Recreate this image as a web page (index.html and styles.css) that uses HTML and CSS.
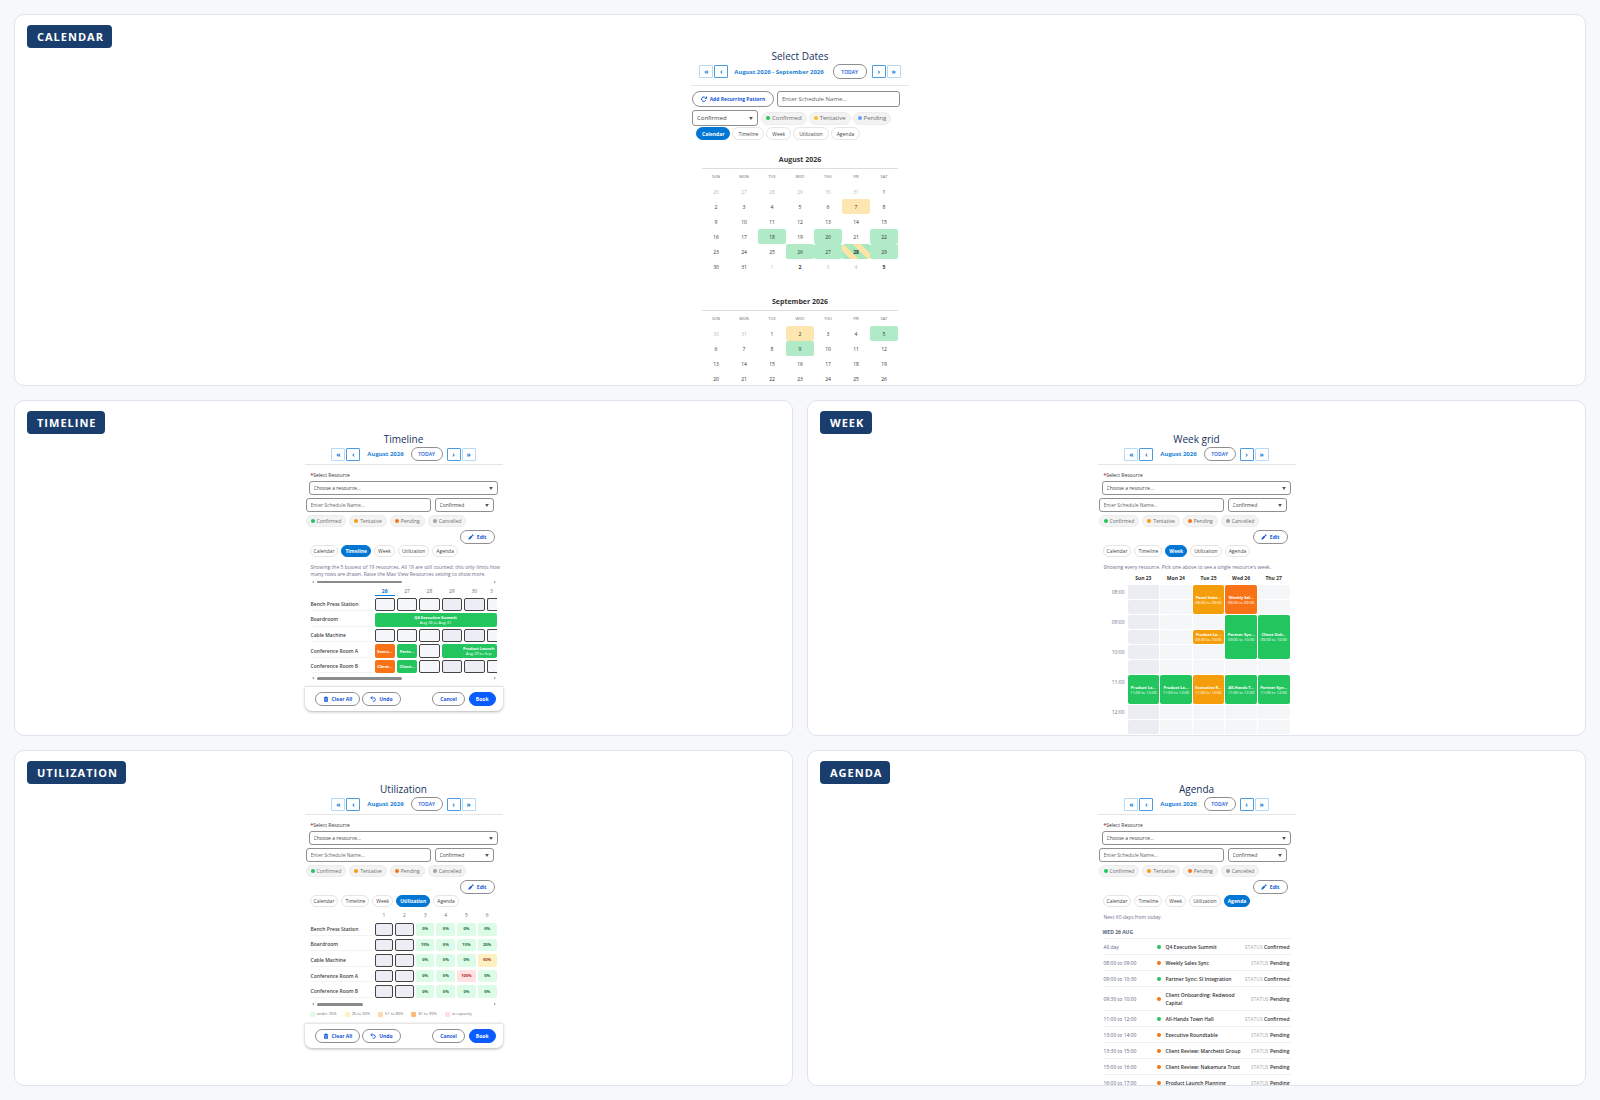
FILE: index.html
```html
<!DOCTYPE html>
<html lang="en">
<head>
    <meta charset="UTF-8">
    <meta name="viewport" content="width=device-width, initial-scale=1.0">
    <title>Schedule Views</title>
    <link rel="stylesheet" href="styles.css">
</head>
<body>
    <svg class="sprite" aria-hidden="true">
        <symbol id="i-edit" viewBox="0 0 16 16"><path d="M1 15l1-4.500 6.500-6.500 3.500 3.500L5.500 14zM9.700 2.800l1.600-1.600a1.200 1.200 0 0 1 1.700 0l1.800 1.800a1.200 1.200 0 0 1 0 1.700l-1.600 1.600z" fill="currentColor"/></symbol>
        <symbol id="i-trash" viewBox="0 0 16 16"><path d="M2 3h4V1h4v2h4v2H2zM3 6h10v8a1.500 1.500 0 0 1-1.500 1.500h-7A1.500 1.500 0 0 1 3 14z" fill="currentColor"/><path d="M6.500 8v5M9.500 8v5" stroke="#fff" stroke-width="1"/></symbol>
        <symbol id="i-undo" viewBox="0 0 16 16"><path d="M6 1L2 5l4 4M2.500 5H10a4 4 0 0 1 4 4v1a4 4 0 0 1-4 4H7" fill="none" stroke="currentColor" stroke-width="2.400"/></symbol>
        <symbol id="i-repeat" viewBox="0 0 16 16"><path d="M10 3A6 6 0 1 0 13 11" fill="none" stroke="currentColor" stroke-width="2.600"/><path d="M9 7h7V0z" fill="currentColor"/></symbol>
    </svg>

    <section class="panel wide">
        <span class="badge">CALENDAR</span>
        <div class="widget large">
            <h2>Select Dates</h2>
            <div class="nav">
                <button class="step far">«</button><button class="step">‹</button>
                <span class="range">August 2026 - September 2026</span>
                <button class="pill today">TODAY</button>
                <button class="step">›</button><button class="step far">»</button>
            </div>
            <div class="row">
                <button class="pill recurring"><svg><use href="#i-repeat"/></svg>Add Recurring Pattern</button>
                <input class="field" type="text" aria-label="Schedule name" placeholder="Enter Schedule Name...">
            </div>
            <div class="row">
                <select class="field status" aria-label="Status"><option>Confirmed</option></select>
                <div class="chips">
                    <span class="chip"><i class="dot green"></i>Confirmed</span>
                    <span class="chip"><i class="dot yellow"></i>Tentative</span>
                    <span class="chip"><i class="dot blue"></i>Pending</span>
                </div>
            </div>
            <div class="tabs">
                <button class="active">Calendar</button><button>Timeline</button><button>Week</button><button>Utilization</button><button>Agenda</button>
            </div>
            <table class="month">
                <caption>August 2026</caption>
                <thead><tr><th>SUN</th><th>MON</th><th>TUE</th><th>WED</th><th>THU</th><th>FRI</th><th>SAT</th></tr></thead>
                <tbody>
                    <tr><td class="out">26</td><td class="out">27</td><td class="out">28</td><td class="out">29</td><td class="out">30</td><td class="out">31</td><td>1</td></tr>
                    <tr><td>2</td><td>3</td><td>4</td><td>5</td><td>6</td><td class="tentative">7</td><td>8</td></tr>
                    <tr><td>9</td><td>10</td><td>11</td><td>12</td><td>13</td><td>14</td><td>15</td></tr>
                    <tr><td>16</td><td>17</td><td class="confirmed">18</td><td>19</td><td class="confirmed">20</td><td>21</td><td class="confirmed">22</td></tr>
                    <tr><td>23</td><td>24</td><td>25</td><td class="confirmed">26</td><td class="confirmed">27</td><td class="mixed">28</td><td class="confirmed">29</td></tr>
                    <tr><td>30</td><td>31</td><td class="out">1</td><td class="strong">2</td><td class="out">3</td><td class="out">4</td><td class="strong">5</td></tr>
                </tbody>
            </table>
            <table class="month">
                <caption>September 2026</caption>
                <thead><tr><th>SUN</th><th>MON</th><th>TUE</th><th>WED</th><th>THU</th><th>FRI</th><th>SAT</th></tr></thead>
                <tbody>
                    <tr><td class="out">30</td><td class="out">31</td><td>1</td><td class="tentative">2</td><td>3</td><td>4</td><td class="confirmed">5</td></tr>
                    <tr><td>6</td><td>7</td><td>8</td><td class="confirmed">9</td><td>10</td><td>11</td><td>12</td></tr>
                    <tr><td>13</td><td>14</td><td>15</td><td>16</td><td>17</td><td>18</td><td>19</td></tr>
                    <tr><td>20</td><td>21</td><td>22</td><td>23</td><td>24</td><td>25</td><td>26</td></tr>
                </tbody>
            </table>
        </div>
    </section>

    <section class="panel">
        <span class="badge">TIMELINE</span>
        <div class="widget">
            <h2>Timeline</h2>
            <div class="nav">
                <button class="step far">«</button><button class="step">‹</button>
                <span class="range">August 2026</span>
                <button class="pill today">TODAY</button>
                <button class="step">›</button><button class="step far">»</button>
            </div>
            <div class="resource">
                <label for="res-timeline"><b>*</b>Select Resource</label>
                <select class="field" id="res-timeline"><option>Choose a resource...</option></select>
            </div>
            <div class="row">
                <input class="field" type="text" aria-label="Schedule name" placeholder="Enter Schedule Name...">
                <select class="field status" aria-label="Status"><option>Confirmed</option></select>
            </div>
            <div class="chips">
                <span class="chip"><i class="dot green"></i>Confirmed</span>
                <span class="chip"><i class="dot amber"></i>Tentative</span>
                <span class="chip"><i class="dot orange"></i>Pending</span>
                <span class="chip"><i class="dot gray"></i>Cancelled</span>
            </div>
            <button class="pill edit"><svg><use href="#i-edit"/></svg>Edit</button>
            <div class="tabs">
                <button>Calendar</button><button class="active">Timeline</button><button>Week</button><button>Utilization</button><button>Agenda</button>
            </div>
            <p class="hint">Showing the 5 busiest of 19 resources. All 19 are still counted; this only limits how many rows are drawn. Raise the Max View Resources setting to show more.</p>
            <div class="scrollbar thin"><i class="thumb half"></i></div>
            <table class="timeline">
                <colgroup><col class="name"><col><col><col><col><col><col class="cut"></colgroup>
                <thead><tr><th></th><th class="now">26</th><th>27</th><th>28</th><th>29</th><th>30</th><th>3</th></tr></thead>
                <tbody>
                    <tr><th>Bench Press Station</th><td class="slot"></td><td class="slot"></td><td class="slot"></td><td class="slot off"></td><td class="slot off"></td><td class="slot last"></td></tr>
                    <tr><th>Boardroom</th><td class="event green" colspan="6"><b>Q4 Executive Summit</b><small>Aug 26 to Aug 31</small></td></tr>
                    <tr><th>Cable Machine</th><td class="slot"></td><td class="slot"></td><td class="slot"></td><td class="slot off"></td><td class="slot off"></td><td class="slot last"></td></tr>
                    <tr><th>Conference Room A</th><td class="event orange"><b>Execu...</b></td><td class="event green"><b>Partn...</b></td><td class="slot"></td><td class="event green cutoff" colspan="3"><b>Product Launch</b><small>Aug 29 to Sep</small></td></tr>
                    <tr><th>Conference Room B</th><td class="event orange"><b>Client...</b></td><td class="event green"><b>Client...</b></td><td class="slot"></td><td class="slot off"></td><td class="slot off"></td><td class="slot last"></td></tr>
                </tbody>
            </table>
            <div class="scrollbar"><i class="thumb half"></i></div>
            <div class="footer">
                <button class="pill"><svg><use href="#i-trash"/></svg>Clear All</button>
                <button class="pill"><svg><use href="#i-undo"/></svg>Undo</button>
                <button class="pill cancel">Cancel</button>
                <button class="pill book">Book</button>
            </div>
        </div>
    </section>

    <section class="panel">
        <span class="badge">WEEK</span>
        <div class="widget">
            <h2>Week grid</h2>
            <div class="nav">
                <button class="step far">«</button><button class="step">‹</button>
                <span class="range">August 2026</span>
                <button class="pill today">TODAY</button>
                <button class="step">›</button><button class="step far">»</button>
            </div>
            <div class="resource">
                <label for="res-week"><b>*</b>Select Resource</label>
                <select class="field" id="res-week"><option>Choose a resource...</option></select>
            </div>
            <div class="row">
                <input class="field" type="text" aria-label="Schedule name" placeholder="Enter Schedule Name...">
                <select class="field status" aria-label="Status"><option>Confirmed</option></select>
            </div>
            <div class="chips">
                <span class="chip"><i class="dot green"></i>Confirmed</span>
                <span class="chip"><i class="dot amber"></i>Tentative</span>
                <span class="chip"><i class="dot orange"></i>Pending</span>
                <span class="chip"><i class="dot gray"></i>Cancelled</span>
            </div>
            <button class="pill edit"><svg><use href="#i-edit"/></svg>Edit</button>
            <div class="tabs">
                <button>Calendar</button><button>Timeline</button><button class="active">Week</button><button>Utilization</button><button>Agenda</button>
            </div>
            <p class="hint">Showing every resource. Pick one above to see a single resource's week.</p>
            <table class="week">
                <colgroup><col class="hour"><col><col><col><col><col></colgroup>
                <thead><tr><th></th><th>Sun 23</th><th>Mon 24</th><th>Tue 25</th><th>Wed 26</th><th>Thu 27</th></tr></thead>
                <tbody>
                    <tr><th>08:00</th><td class="off"></td><td></td><td class="event amber" rowspan="2"><b>Panel Inter...</b><small>08:00 to 09:00</small></td><td class="event orange" rowspan="2"><b>Weekly Sal...</b><small>08:00 to 09:00</small></td><td></td></tr>
                    <tr><th></th><td class="off"></td><td></td><td></td></tr>
                    <tr><th>09:00</th><td class="off"></td><td></td><td></td><td class="event green" rowspan="3"><b>Partner Syn...</b><small>09:00 to 10:30</small></td><td class="event green" rowspan="3"><b>Client Onb...</b><small>09:00 to 10:30</small></td></tr>
                    <tr><th></th><td class="off"></td><td></td><td class="event amber"><b>Product La...</b><small>09:30 to 10:00</small></td></tr>
                    <tr><th>10:00</th><td class="off"></td><td></td><td></td></tr>
                    <tr><th></th><td class="off"></td><td></td><td></td><td></td><td></td></tr>
                    <tr><th>11:00</th><td class="event green" rowspan="2"><b>Product La...</b><small>11:00 to 12:00</small></td><td class="event green" rowspan="2"><b>Product La...</b><small>11:00 to 12:00</small></td><td class="event amber" rowspan="2"><b>Executive R...</b><small>11:00 to 12:00</small></td><td class="event green" rowspan="2"><b>All-Hands T...</b><small>11:00 to 12:00</small></td><td class="event green" rowspan="2"><b>Partner Syn...</b><small>11:00 to 12:00</small></td></tr>
                    <tr><th></th></tr>
                    <tr><th>12:00</th><td class="off"></td><td></td><td></td><td></td><td></td></tr>
                    <tr><th></th><td class="off"></td><td></td><td></td><td></td><td></td></tr>
                </tbody>
            </table>
        </div>
    </section>

    <section class="panel">
        <span class="badge">UTILIZATION</span>
        <div class="widget">
            <h2>Utilization</h2>
            <div class="nav">
                <button class="step far">«</button><button class="step">‹</button>
                <span class="range">August 2026</span>
                <button class="pill today">TODAY</button>
                <button class="step">›</button><button class="step far">»</button>
            </div>
            <div class="resource">
                <label for="res-util"><b>*</b>Select Resource</label>
                <select class="field" id="res-util"><option>Choose a resource...</option></select>
            </div>
            <div class="row">
                <input class="field" type="text" aria-label="Schedule name" placeholder="Enter Schedule Name...">
                <select class="field status" aria-label="Status"><option>Confirmed</option></select>
            </div>
            <div class="chips">
                <span class="chip"><i class="dot green"></i>Confirmed</span>
                <span class="chip"><i class="dot amber"></i>Tentative</span>
                <span class="chip"><i class="dot orange"></i>Pending</span>
                <span class="chip"><i class="dot gray"></i>Cancelled</span>
            </div>
            <button class="pill edit"><svg><use href="#i-edit"/></svg>Edit</button>
            <div class="tabs">
                <button>Calendar</button><button>Timeline</button><button>Week</button><button class="active">Utilization</button><button>Agenda</button>
            </div>
            <table class="usage">
                <colgroup><col class="name"><col><col><col><col><col><col></colgroup>
                <thead><tr><th></th><th>1</th><th>2</th><th>3</th><th>4</th><th>5</th><th>6</th></tr></thead>
                <tbody>
                    <tr><th>Bench Press Station</th><td class="slot off"></td><td class="slot off"></td><td>0%</td><td>0%</td><td>0%</td><td>0%</td></tr>
                    <tr><th>Boardroom</th><td class="slot off"></td><td class="slot off"></td><td>15%</td><td>0%</td><td>15%</td><td>20%</td></tr>
                    <tr><th>Cable Machine</th><td class="slot off"></td><td class="slot off"></td><td>0%</td><td>0%</td><td>0%</td><td class="mid">50%</td></tr>
                    <tr><th>Conference Room A</th><td class="slot off"></td><td class="slot off"></td><td>0%</td><td>0%</td><td class="full">100%</td><td>0%</td></tr>
                    <tr><th>Conference Room B</th><td class="slot off"></td><td class="slot off"></td><td>0%</td><td>0%</td><td>0%</td><td>0%</td></tr>
                </tbody>
            </table>
            <div class="scrollbar"><i class="thumb quarter"></i></div>
            <div class="legend">
                <span><i class="l1"></i>under 25%</span>
                <span><i class="l2"></i>26 to 50%</span>
                <span><i class="l3"></i>51 to 80%</span>
                <span><i class="l4"></i>81 to 99%</span>
                <span><i class="l5"></i>at capacity</span>
            </div>
            <div class="footer">
                <button class="pill"><svg><use href="#i-trash"/></svg>Clear All</button>
                <button class="pill"><svg><use href="#i-undo"/></svg>Undo</button>
                <button class="pill cancel">Cancel</button>
                <button class="pill book">Book</button>
            </div>
        </div>
    </section>

    <section class="panel">
        <span class="badge">AGENDA</span>
        <div class="widget">
            <h2>Agenda</h2>
            <div class="nav">
                <button class="step far">«</button><button class="step">‹</button>
                <span class="range">August 2026</span>
                <button class="pill today">TODAY</button>
                <button class="step">›</button><button class="step far">»</button>
            </div>
            <div class="resource">
                <label for="res-agenda"><b>*</b>Select Resource</label>
                <select class="field" id="res-agenda"><option>Choose a resource...</option></select>
            </div>
            <div class="row">
                <input class="field" type="text" aria-label="Schedule name" placeholder="Enter Schedule Name...">
                <select class="field status" aria-label="Status"><option>Confirmed</option></select>
            </div>
            <div class="chips">
                <span class="chip"><i class="dot green"></i>Confirmed</span>
                <span class="chip"><i class="dot amber"></i>Tentative</span>
                <span class="chip"><i class="dot orange"></i>Pending</span>
                <span class="chip"><i class="dot gray"></i>Cancelled</span>
            </div>
            <button class="pill edit"><svg><use href="#i-edit"/></svg>Edit</button>
            <div class="tabs">
                <button>Calendar</button><button>Timeline</button><button>Week</button><button>Utilization</button><button class="active">Agenda</button>
            </div>
            <p class="hint">Next 60 days from today.</p>
            <h3>WED 26 AUG</h3>
            <ul class="agenda">
                <li><time>All day</time><i class="dot green"></i><strong>Q4 Executive Summit</strong><span><small>STATUS</small> Confirmed</span></li>
                <li><time>08:00 to 09:00</time><i class="dot orange"></i><strong>Weekly Sales Sync</strong><span><small>STATUS</small> Pending</span></li>
                <li><time>09:00 to 10:30</time><i class="dot green"></i><strong>Partner Sync: SI Integration</strong><span><small>STATUS</small> Confirmed</span></li>
                <li><time>09:30 to 10:00</time><i class="dot orange"></i><strong>Client Onboarding: Redwood Capital</strong><span><small>STATUS</small> Pending</span></li>
                <li><time>11:00 to 12:00</time><i class="dot green"></i><strong>All-Hands Town Hall</strong><span><small>STATUS</small> Confirmed</span></li>
                <li><time>13:00 to 14:00</time><i class="dot orange"></i><strong>Executive Roundtable</strong><span><small>STATUS</small> Pending</span></li>
                <li><time>13:30 to 15:00</time><i class="dot orange"></i><strong>Client Review: Marchetti Group</strong><span><small>STATUS</small> Pending</span></li>
                <li><time>15:00 to 16:00</time><i class="dot orange"></i><strong>Client Review: Nakamura Trust</strong><span><small>STATUS</small> Pending</span></li>
                <li><time>16:00 to 17:00</time><i class="dot orange"></i><strong>Product Launch Planning</strong><span><small>STATUS</small> Pending</span></li>
            </ul>
        </div>
    </section>
</body>
</html>
```
FILE: styles.css
```css
* {
    box-sizing: border-box;
}

body {
    margin: 0;
    height: 100vh;
    padding: 14px;
    display: grid;
    grid-template-columns: 1fr 1fr;
    grid-template-rows: minmax(0, 372fr) minmax(0, 336fr) minmax(0, 336fr);
    gap: 14px;
    background: #f6f8fa;
    color: #333;
    font-family: 'Segoe UI', 'Open Sans', 'Noto Sans', sans-serif;
    font-size: 5px;
    line-height: 8px;
}

.sprite {
    display: none;
}

.panel {
    position: relative;
    overflow: hidden;
    background: #fff;
    border: 1px solid #dde3ec;
    border-radius: 10px;
}

.panel.wide {
    grid-column: 1 / -1;
}

/* label over the corner of each panel */
.badge {
    position: absolute;
    top: 10px;
    left: 12px;
    padding: 0 8px 0 10px;
    border-radius: 4px;
    background: #193d6d;
    color: #fff;
    font-size: 11px;
    font-weight: 700;
    line-height: 23px;
    letter-spacing: 1px;
}

.widget {
    max-width: 198px;
    margin: 0 auto;
    padding-top: 31px;
}

.widget.large {
    max-width: 218px;
    padding-top: 34px;
}

h2 {
    margin: 0;
    color: #16325c;
    font-size: 10px;
    font-weight: 400;
    line-height: 15px;
    text-align: center;
}

button,
input,
select {
    margin: 0;
    font-family: inherit;
    font-size: 5px;
}

button {
    cursor: pointer;
}

/* navigation */
.nav {
    display: flex;
    justify-content: center;
    align-items: center;
    gap: 1px;
    padding-bottom: 3px;
    margin-bottom: 6px;
    border-bottom: 1px solid #e5e5e5;
}

.step {
    width: 14px;
    height: 13px;
    padding: 0;
    border: 1px solid #4a9be0;
    border-radius: 1px;
    background: #fff;
    color: #0176d3;
    font-size: 7px;
    font-weight: 700;
    line-height: 9px;
}

.step.far {
    border-color: #b7d9f5;
}

.range {
    padding: 0 6px;
    color: #1b7fd6;
    font-weight: 700;
    font-size: 6px;
    white-space: nowrap;
}

.pill {
    display: inline-flex;
    align-items: center;
    justify-content: center;
    gap: 3px;
    height: 14px;
    padding: 0 7px;
    border: 1px solid #8f8f8f;
    border-radius: 7px;
    background: #fff;
    color: #1558d6;
    font-weight: 700;
    line-height: 8px;
    white-space: nowrap;
}

.pill svg {
    width: 6px;
    height: 6px;
}

.today {
    width: 32px;
    padding: 0;
    margin-right: 3px;
    font-weight: 600;
}

/* form controls */
.row {
    display: flex;
    align-items: center;
    gap: 4px;
    padding: 0 9px 0 1px;
    margin-bottom: 3px;
}

.field {
    height: 14px;
    min-width: 0;
    flex: 1;
    padding: 0 4px;
    border: 1px solid #8f8f8f;
    border-radius: 3px;
    background: #fff;
    color: #444;
}

.field::placeholder {
    color: #666;
}

select.field {
    appearance: none;
    background: #fff url("data:image/svg+xml,%3Csvg xmlns='http://www.w3.org/2000/svg' viewBox='0 0 10 8'%3E%3Cpath d='M0 0h10L5 8z' fill='%23555'/%3E%3C/svg%3E") no-repeat right 4px center / 4px 3px;
}

.field.status {
    flex: 0 0 59px;
}

.resource {
    display: flex;
    flex-direction: column;
    padding: 0 5px 0 4px;
    margin-bottom: 3px;
}

.resource label {
    padding-left: 2px;
    margin-bottom: 2px;
}

.resource label b {
    color: #c23934;
}

.resource .field {
    flex: none;
}

.chips {
    display: flex;
    gap: 3px;
    padding-left: 1px;
    margin-bottom: 3px;
}

.chip {
    display: flex;
    align-items: center;
    gap: 2px;
    height: 12px;
    padding: 0 4px;
    border: 1px solid #ececec;
    border-radius: 6px;
    background: #f3f3f3;
    color: #706e6b;
}

.dot {
    width: 4px;
    height: 4px;
    border-radius: 50%;
}

.green {
    background: #22c55e;
}

.amber {
    background: #f59e0b;
}

.yellow {
    background: #fbbf24;
}

.orange {
    background: #f97316;
}

.blue {
    background: #60a5fa;
}

.gray {
    background: #9ca3af;
}

.pill.edit {
    display: flex;
    margin: 0 8px 1px auto;
}

.tabs {
    display: flex;
    gap: 3px;
    padding-left: 5px;
}

.tabs button {
    height: 12px;
    padding: 0 3px;
    border: 1px solid #e5e5e5;
    border-radius: 6px;
    background: #fff;
    color: #444;
    line-height: 8px;
}

.tabs .active {
    border-color: #0176d3;
    background: #0176d3;
    color: #fff;
    font-weight: 700;
}

.hint {
    margin: 7px 2px 0 6px;
    color: #706e8b;
    line-height: 7px;
}

table {
    table-layout: fixed;
    border-collapse: separate;
}

th,
td {
    padding: 0;
}

/* month calendar */
.large .nav {
    padding-bottom: 6px;
    margin-bottom: 5px;
}

.large .range {
    padding: 0 5px;
}

.large .today {
    width: 34px;
    height: 15px;
    margin: 0 4px 0 3px;
}

.large .row {
    gap: 3px;
    padding: 0 9px 0 1px;
}

.large .field,
.recurring {
    height: 16px;
}

.large .field,
.large .chip {
    font-size: 6px;
}

.large .row:nth-of-type(3) {
    margin-bottom: 1px;
}

.recurring {
    flex: 0 0 82px;
    padding: 0;
    border-radius: 8px;
}

.large .field.status {
    flex: 0 0 66px;
}

.large .chips {
    gap: 2px;
    margin: 0;
    padding: 0;
}

.large .chip,
.large .tabs button {
    height: 13px;
    border-radius: 7px;
}

.large .tabs {
    gap: 2px;
}

.large .tabs button {
    padding: 0 5px;
}

.month {
    width: calc(100% - 22px);
    margin: 13px 11px 21px;
    border-spacing: 0;
}

.month caption {
    height: 16px;
    border-bottom: 1px solid #ddd;
    font-size: 7px;
    font-weight: 700;
    line-height: 13px;
}

.month thead th {
    height: 15px;
    color: #706e6b;
    font-size: 4px;
    font-weight: 400;
}

.month td {
    height: 15px;
    border-radius: 2px;
    text-align: center;
}

.month .out {
    color: #bbb;
}

.month .strong {
    font-weight: 700;
}

.month .confirmed {
    background: #b0eac6;
}

.month .tentative {
    background: #fde6b0;
}

.month .mixed {
    background: repeating-linear-gradient(45deg, #a7e8bf 0 6px, #fde3a4 6px 12px);
    font-weight: 700;
}

/* timeline and utilization */
.scrollbar {
    display: flex;
    align-items: center;
    justify-content: space-between;
    height: 6px;
    margin: 0 6px;
}

.scrollbar.thin {
    margin-top: 1px;
}

.scrollbar::before,
.scrollbar::after {
    content: "";
    border: 1px solid transparent;
    border-right: 2px solid #888;
}

.scrollbar::after {
    border-right: 1px solid transparent;
    border-left: 2px solid #888;
}

.thumb {
    height: 3px;
    margin: 0 auto 0 3px;
    border-radius: 2px;
    background: #8b8b8b;
}

.thin .thumb {
    height: 2px;
}

.thumb.half {
    width: 46%;
}

.thumb.quarter {
    width: 25%;
}

.timeline,
.usage {
    width: calc(100% - 8px);
    height: 90px;
    margin: 0 4px;
    border-spacing: 2px;
}

.name {
    width: 62px;
}

.timeline .cut {
    width: 10px;
}

.timeline thead th,
.usage thead th {
    height: 9px;
    color: #706e6b;
    font-weight: 400;
    line-height: 7px;
}

.timeline thead .now {
    border-bottom: 1px solid #0176d3;
    color: #0176d3;
    font-weight: 700;
}

.timeline tbody th,
.usage tbody th {
    border-bottom: 1px solid #f3f3f3;
    color: #444;
    font-weight: 600;
    text-align: left;
    white-space: nowrap;
}

.slot {
    border: 1px solid #444;
    border-radius: 2px;
    background: #f6f7fb;
}

.slot.off {
    background: #ecedf5;
}

.slot.last {
    border-right: 0;
    border-radius: 2px 0 0 2px;
}

.event {
    border-radius: 2px;
    color: #fff;
    text-align: center;
}

.event b,
.event small {
    display: block;
    font-size: 4px;
    line-height: 5px;
    white-space: nowrap;
}

.event.cutoff {
    padding-left: 19px;
}

.usage {
    height: 93px;
    margin-top: 1px;
    border-spacing: 2px 3px;
}

.usage td {
    border-radius: 2px;
    background: #dcfce7;
    color: #166534;
    font-weight: 700;
    font-size: 4px;
    line-height: 6px;
    text-align: center;
}

.usage .slot {
    background: #ecedf5;
}

.usage .mid {
    background: #fef0c3;
    color: #9a3412;
}

.usage .full {
    background: #fee2e2;
    color: #b91c1c;
}

.legend {
    display: flex;
    gap: 8px;
    height: 14px;
    align-items: center;
    padding-left: 5px;
    color: #706e6b;
    font-size: 4px;
}

.legend span {
    display: flex;
    align-items: center;
    gap: 2px;
}

.legend i {
    width: 5px;
    height: 5px;
    border-radius: 1px;
}

.l1 { background: #dcfce7; }
.l2 { background: #fef0c3; }
.l3 { background: #fed7aa; }
.l4 { background: #fdba74; }
.l5 { background: #fee2e2; }

.footer {
    display: flex;
    align-items: center;
    gap: 2px;
    height: 25px;
    margin-top: 5px;
    padding: 0 7px 0 10px;
    border-top: 1px solid #e5e5e5;
    border-radius: 0 0 7px 7px;
    box-shadow: 0 1px 3px rgba(0, 0, 0, 0.3);
}

.legend + .footer {
    margin-top: 2px;
}

.cancel {
    margin-left: auto;
    margin-right: 2px;
}

.pill.book {
    padding: 0 6px;
    border-color: #0b5cff;
    background: #0b5cff;
    color: #fff;
}

/* week grid */
.week {
    width: calc(100% - 9px);
    margin: 0 5px 0 4px;
    border-spacing: 1px;
}

.hour {
    width: 24px;
}

.week thead th {
    height: 12px;
    font-weight: 700;
}

.week tbody tr {
    height: 14px;
}

.week tbody th {
    padding-right: 2px;
    color: #706e8b;
    font-weight: 400;
    text-align: right;
}

.week td {
    border-radius: 2px;
    background: #f5f6f8;
}

.week .off {
    background: #ecedf3;
}

.week .green {
    background: #22c55e;
}

.week .amber {
    background: #f59e0b;
}

.week .orange {
    background: #f97316;
}

/* agenda */
h3 {
    margin: 7px 5px 0;
    padding-bottom: 2px;
    border-bottom: 1px solid #eee;
    color: #5c6480;
    font-size: 5px;
    font-weight: 700;
}

.agenda {
    margin: 0 5px;
    padding: 0;
    list-style: none;
}

.agenda li {
    display: flex;
    align-items: center;
    padding: 4px 1px 3px;
    border-bottom: 1px solid #eee;
}

.agenda time {
    flex: 0 0 53px;
    color: #5c6480;
}

.agenda strong {
    flex: 1;
    padding: 0 5px;
    font-weight: 600;
}

.agenda span {
    font-weight: 600;
}

.agenda small {
    color: #aaa;
    font-size: 5px;
    font-weight: 400;
}
```
